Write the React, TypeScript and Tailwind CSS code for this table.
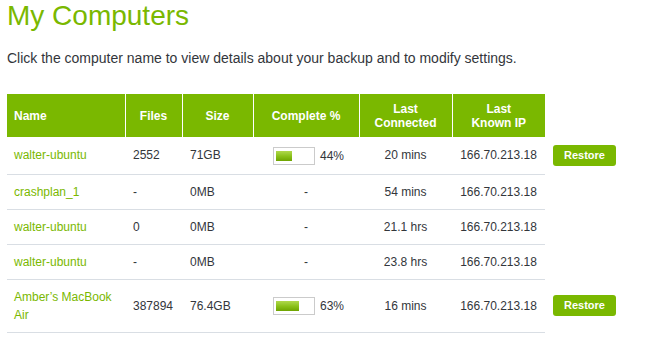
import React from "react";

type Computer = {
  name: string;
  files: string;
  size: string;
  percent: number | null;
  lastConnected: string;
  ip: string;
  restorable: boolean;
};

const computers: Computer[] = [
  { name: "walter-ubuntu", files: "2552", size: "71GB", percent: 44, lastConnected: "20 mins", ip: "166.70.213.18", restorable: true },
  { name: "crashplan_1", files: "-", size: "0MB", percent: null, lastConnected: "54 mins", ip: "166.70.213.18", restorable: false },
  { name: "walter-ubuntu", files: "0", size: "0MB", percent: null, lastConnected: "21.1 hrs", ip: "166.70.213.18", restorable: false },
  { name: "walter-ubuntu", files: "-", size: "0MB", percent: null, lastConnected: "23.8 hrs", ip: "166.70.213.18", restorable: false },
  { name: "Amber\u2019s MacBook Air", files: "387894", size: "76.4GB", percent: 63, lastConnected: "16 mins", ip: "166.70.213.18", restorable: true },
];

function Progress({ percent }: { percent: number }) {
  return (
    <span className="inline-flex items-center gap-[5px] align-middle">
      <span className="flex h-[18px] w-[42px] items-stretch border border-[#cbcbcb] bg-white px-[2px] py-[3px]">
        <span
          className="block h-full bg-gradient-to-b from-[#b0d84a] via-[#8cc21a] to-[#6ea400]"
          style={{ width: `${percent}%` }}
        />
      </span>
      <span>{percent}%</span>
    </span>
  );
}

export default function App() {
  const cell = "border-b border-[#d9dee4] py-2 align-middle";
  return (
    <div
      className="min-h-screen bg-white px-[7px] text-[#33363b]"
      style={{ fontFamily: '"Liberation Sans", Arial, Helvetica, sans-serif' }}
    >
      <h1 className="text-[28px] leading-[32px] font-normal text-[#7ab800]">My Computers</h1>
      <p className="mt-[16px] text-[14px] leading-[20px]">
        Click the computer name to view details about your backup and to modify settings.
      </p>

      <table className="mt-[26px] table-fixed border-collapse text-[12px] leading-[18px]">
        <colgroup>
          <col className="w-[118px]" />
          <col className="w-[57px]" />
          <col className="w-[71px]" />
          <col className="w-[106px]" />
          <col className="w-[93px]" />
          <col className="w-[93px]" />
          <col className="w-[80px]" />
        </colgroup>
        <thead>
          <tr className="text-[12px] leading-[14px] font-bold text-white">
            <th className="h-[43px] border-r border-white bg-[#7ab800] pl-[7px] text-left">Name</th>
            <th className="border-r border-white bg-[#7ab800] text-center">Files</th>
            <th className="border-r border-white bg-[#7ab800] text-center">Size</th>
            <th className="border-r border-white bg-[#7ab800] text-center">Complete %</th>
            <th className="border-r border-white bg-[#7ab800] text-center">
              Last
              <br />
              Connected
            </th>
            <th className="bg-[#7ab800] text-center">
              Last
              <br />
              Known IP
            </th>
            <th className="bg-white" />
          </tr>
        </thead>
        <tbody>
          {computers.map((c, i) => (
            <tr key={i}>
              <td className={`${cell} pl-[7px] pr-[6px]`}>
                <a href="#" className="text-[#7ab800]">
                  {c.name}
                </a>
              </td>
              <td className={`${cell} pl-[8px]`}>{c.files}</td>
              <td className={`${cell} pl-[8px]`}>{c.size}</td>
              <td className={`${cell} ${c.percent === null ? "text-center" : "pl-[20px]"}`}>
                {c.percent === null ? "-" : <Progress percent={c.percent} />}
              </td>
              <td className={`${cell} text-center`}>{c.lastConnected}</td>
              <td className={`${cell} text-center`}>{c.ip}</td>
              <td className="py-2 pl-[8px] align-middle">
                {c.restorable && (
                  <button className="h-[21px] w-[63px] rounded-[3px] bg-[#7ab800] text-[11px] font-bold leading-[21px] text-white">
                    Restore
                  </button>
                )}
              </td>
            </tr>
          ))}
        </tbody>
      </table>
    </div>
  );
}
